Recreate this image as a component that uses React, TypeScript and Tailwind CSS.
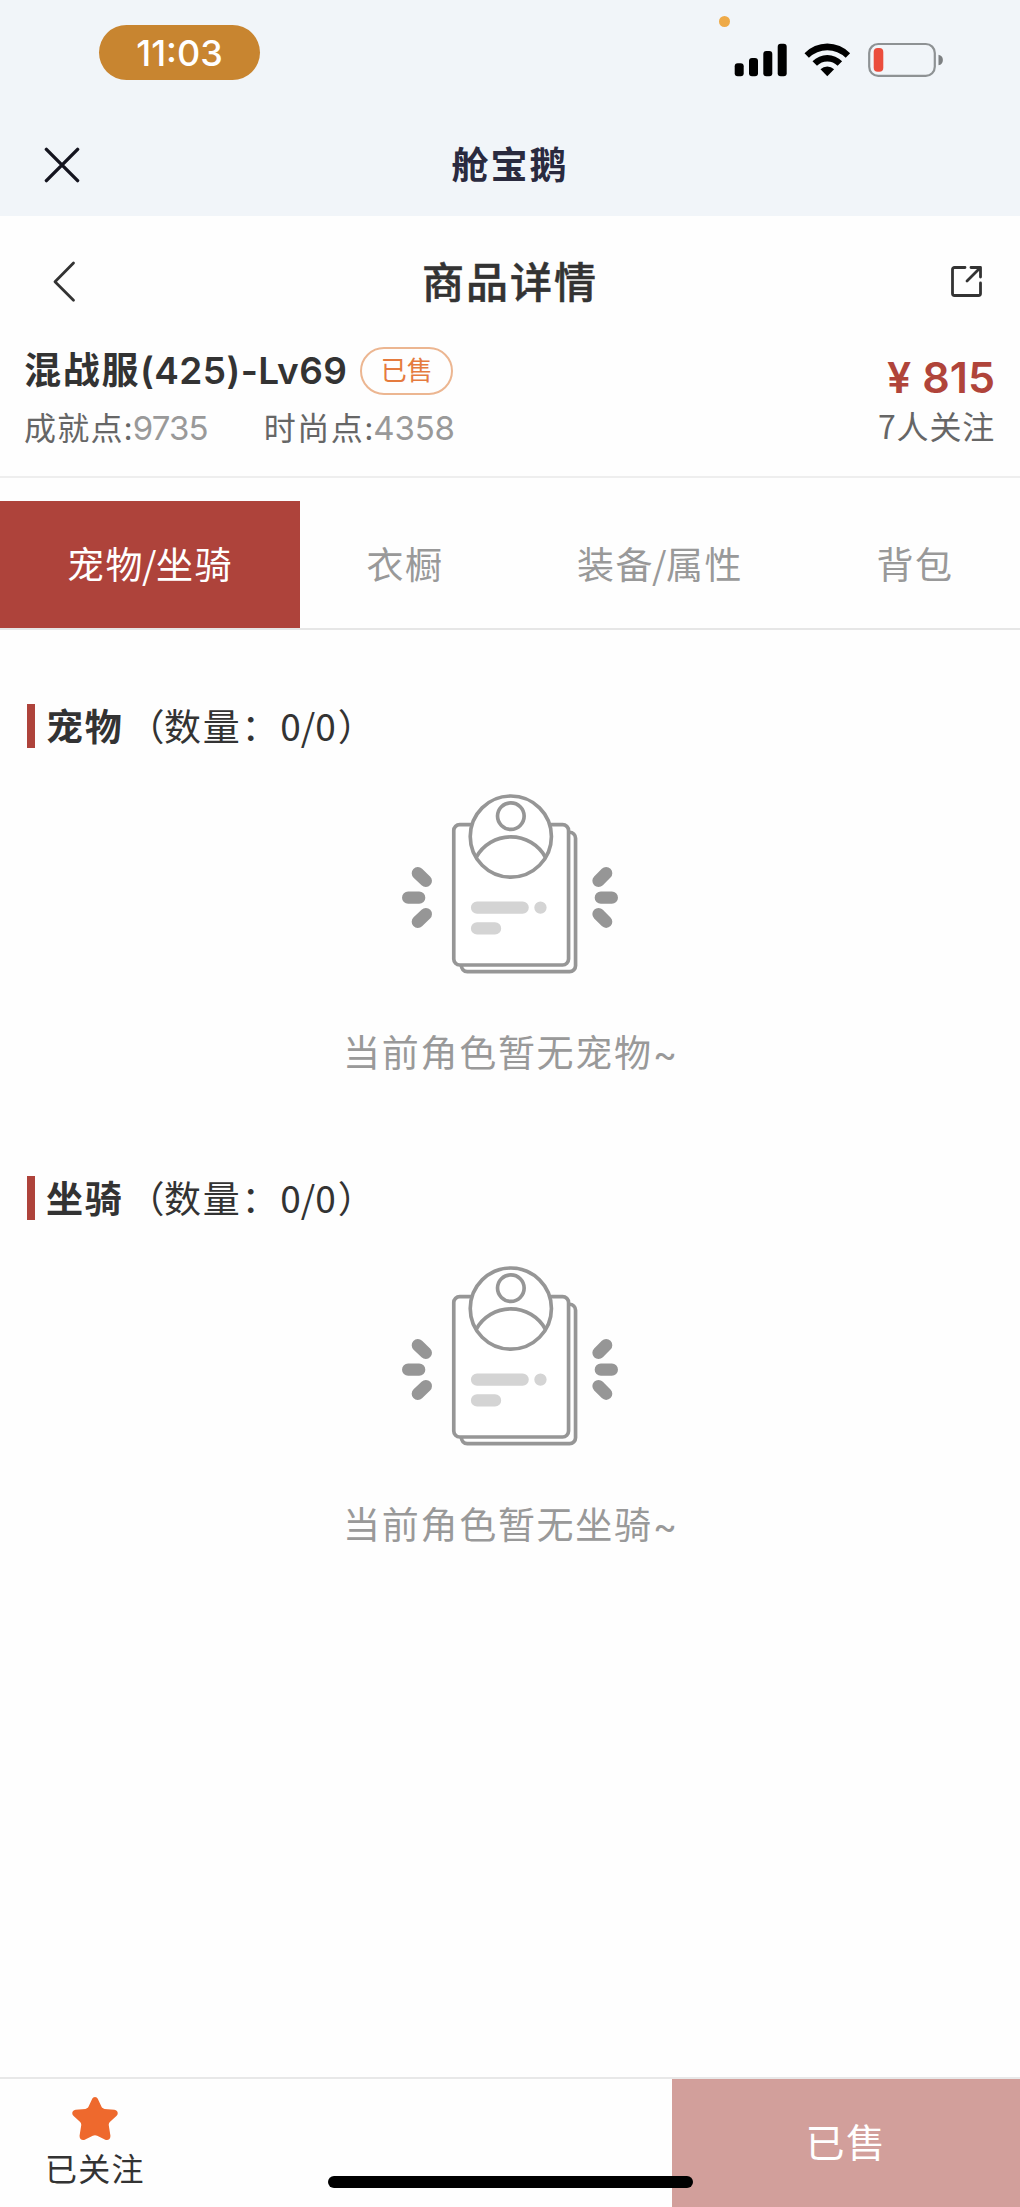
import React, { useState } from "react";

const TABS = [
  { id: "pets", label: "宠物/坐骑", width: "w-[300px]" },
  { id: "wardrobe", label: "衣橱", width: "w-[210px]" },
  { id: "gear", label: "装备/属性", width: "w-[300px]" },
  { id: "bag", label: "背包", width: "w-[210px]" },
];

const SECTIONS = [
  { id: "pet", title: "宠物", count: "0/0", empty: "当前角色暂无宠物~" },
  { id: "mount", title: "坐骑", count: "0/0", empty: "当前角色暂无坐骑~" },
];

function StatusIcons() {
  return (
    <svg className="absolute left-[680px] top-[12px]" width="270" height="70" viewBox="680 12 270 70">
      <circle cx="724.5" cy="21.5" r="5.5" fill="#eeaa48" />
      <rect x="734.7" y="63.3" width="9" height="13" rx="3" />
      <rect x="749" y="58" width="9" height="18.3" rx="3" />
      <rect x="763.3" y="51" width="9" height="25.3" rx="3" />
      <rect x="777.7" y="43.7" width="9" height="32.6" rx="3" />
      {/* wifi */}
      <path d="M804.5 53.2a31.6 31.6 0 0 1 45.6 0l-4.4 4.6a26.4 26.4 0 0 0-36.8 0z" />
      <path d="M812.5 61.3a20.6 20.6 0 0 1 29.6 0l-4.5 4.4a14.6 14.6 0 0 0-20.6 0z" />
      <path d="M820.5 69.2a10.2 10.2 0 0 1 13.6 0l-6.8 7.1z" />
      {/* battery */}
      <rect x="869.2" y="44" width="65.6" height="31.8" rx="9" fill="none" stroke="#8e9294" strokeWidth="2.2" />
      <rect x="873.7" y="48" width="9.6" height="23.8" rx="4" fill="#eb4d3d" />
      <path d="M938.5 54.7a5.4 5.4 0 0 1 0 10.6z" fill="#7d8082" />
    </svg>
  );
}

function EmptyArt() {
  return (
    <svg width="220" height="183" viewBox="60 65 660 550" fill="none" stroke="#969696" strokeWidth="11">
      <path d="M566 186h3a18 18 0 0 1 18 18v383a18 18 0 0 1-18 18H262a18 18 0 0 1-18-20" />
      <rect x="221" y="163" width="345" height="422" rx="18" fill="#fff" />
      <circle cx="392.5" cy="199" r="122" fill="#fff" />
      <circle cx="392.5" cy="137.5" r="40" />
      <path d="M288 262a119 119 0 0 1 209 0" />
      <g strokeWidth="37" strokeLinecap="round">
        <path d="M113 309l24 23M84 382.5h33M137 432l-24 23" />
        <path d="M679 309l-23 23M663 382.5h33M656 432l23 23" />
      </g>
      <g stroke="#d4d4d4" strokeWidth="37" strokeLinecap="round">
        <path d="M291 412.5h137M481.5 412.5h.1M291 475h54" />
      </g>
    </svg>
  );
}

function EmptySection({ title, count, empty }: { title: string; count: string; empty: string }) {
  return (
    <section className="h-[472px]">
      <div className="flex h-[44px] items-center pl-[27px]">
        <span className="h-full w-[8px] bg-[#ae433b]" />
        <h3 className="mb-[2px] ml-[11px] flex font-['Noto_Sans_CJK_SC',sans-serif] text-[37px] leading-[40px] tracking-[1.7px] text-[#333]">
          <span className="font-bold">{title}</span>
          <span className="ml-[4px] -mr-[2px]">（</span>
          <span>数量：</span>
          <span className="tracking-[0px]">{count}</span>
          <span className="ml-[2px]">）</span>
        </h3>
      </div>
      <div className="mt-[44px] flex flex-col items-center">
        <EmptyArt />
        <p className="mt-[59px] pl-[2px] text-[37px] leading-[40px] tracking-[1.7px] text-[#999]">{empty}</p>
      </div>
    </section>
  );
}

export default function App() {
  const [activeTab, setActiveTab] = useState("pets");

  return (
    <div
      lang="zh-CN"
      className="relative flex h-[2207px] w-[1020px] flex-col overflow-hidden bg-[#fefefe] font-['Inter','Noto_Sans_CJK_SC',sans-serif] text-[#333]"
    >
      {/* Status bar + app bar */}
      <header className="relative h-[216px] bg-[#f1f5f9]">
        <div className="pt-[25px] pl-[99px]">
          <div className="flex h-[55px] w-[161px] items-center justify-center rounded-full bg-[#c88530] text-[36px] font-medium leading-none text-white">
            11:03
          </div>
        </div>
        <StatusIcons />
        <div className="mt-[55px] grid h-[60px] grid-cols-3 items-center">
          <svg className="ml-[44px]" width="36" height="36" viewBox="0 0 36 36" stroke="#14141f" strokeWidth="3.4" strokeLinecap="round">
            <path d="M2.4 2.4l31.2 31.2M33.6 2.4L2.4 33.6" />
          </svg>
          <h1 className="pt-[2px] text-center text-[37px] font-bold leading-[40px] tracking-[2px] text-[#2a2a3f]">舱宝鹅</h1>
        </div>
      </header>

      {/* Page title */}
      <div className="grid h-[131px] grid-cols-3 items-center">
        <svg className="ml-[52px]" width="24" height="42" viewBox="0 0 24 42" fill="none" stroke="#333" strokeWidth="2.8" strokeLinecap="round" strokeLinejoin="round">
          <path d="M21.5 2L3 20.7l18.5 18.6" />
        </svg>
        <h2 className="pt-[3px] text-center text-[42px] font-medium leading-[48px] tracking-[2px] [-webkit-text-stroke:0.5px_#333]">商品详情</h2>
        <svg className="mr-[37px] justify-self-end" width="33" height="33" viewBox="0 0 33 33" fill="none" stroke="#333" strokeWidth="2.8" strokeLinecap="round" strokeLinejoin="round">
          <path d="M15 2.5H4.5a2 2 0 0 0-2 2v24a2 2 0 0 0 2 2h24a2 2 0 0 0 2-2V18M21 2.5h9.500V12M30 3L17 16" />
        </svg>
      </div>

      {/* Listing summary */}
      <div className="flex h-[131px] justify-between border-b-2 border-[#eee] pr-[25px] pl-[24px]">
        <div>
          <div className="flex h-[48px] items-center">
            <span className="text-[37px] font-semibold leading-[48px]">
              <span className="tracking-[1.7px]">混战服</span>
              <span className="tracking-[0.4px]">(425)-Lv69</span>
            </span>
            <span className="ml-[13px] flex h-[48px] w-[93px] items-center justify-center rounded-full border-2 border-[#ecb691] text-[26px] leading-none text-[#e57b3e]">
              已售
            </span>
          </div>
          <div className="mt-[13px] flex gap-[56px] text-[32px] leading-[40px] text-[#666]">
            <span>
              <span className="tracking-[1.2px]">成就点</span>:<span className="text-[33px] tracking-[-0.9px] text-[#999]">9735</span>
            </span>
            <span>
              <span className="tracking-[1.5px]">时尚点</span>:<span className="text-[33px] tracking-[-0.2px] text-[#999]">4358</span>
            </span>
          </div>
        </div>
        <div className="flex flex-col items-end">
          <div className="mt-[6px] text-[43px] font-semibold leading-[48px] text-[#b0443a]">
            <span className="mr-[11px]">¥</span>815
          </div>
          <div className="mt-[4px] font-['Noto_Sans_CJK_SC',sans-serif] text-[32px] leading-[40px] tracking-[0.8px] text-[#666]">7人关注</div>
        </div>
      </div>

      {/* Tabs */}
      <nav className="mt-[23px] flex h-[129px] border-b-2 border-[#e6e6e6]">
        {TABS.map((tab) => {
          const [first, second] = tab.label.split("/");
          return (
            <button
              key={tab.id}
              onClick={() => setActiveTab(tab.id)}
              className={`${tab.width} flex items-center justify-center pb-[3px] font-['Noto_Sans_CJK_SC',sans-serif] text-[37px] leading-[40px] tracking-[1.5px] ${
                activeTab === tab.id ? "bg-[#ae433b] text-white" : "text-[#999]"
              }`}
            >
              <span>{first}</span>
              {second && <span className="-mx-[2px]">/</span>}
              {second && <span>{second}</span>}
            </button>
          );
        })}
      </nav>

      <main className="flex-1 pt-[74px]">
        {SECTIONS.map((s) => (
          <EmptySection key={s.id} title={s.title} count={s.count} empty={s.empty} />
        ))}
      </main>

      {/* Bottom bar */}
      <footer className="flex h-[130px] justify-between border-t-2 border-[#e8e8e8]">
        <button className="ml-[45px] flex flex-col items-center pt-[17px]">
          <svg width="46" height="45" viewBox="0 0 46 45" fill="#ee692d">
            <path d="M20 3.200C21.200.3 24.800.3 26 3.200l3.400 7.300c.6 1.400 1.700 2.100 3.200 2.400l9.800.9c3.500.5 4.400 4 2 6.300l-6.300 5.600c-1.100 1-1.500 2.200-1.300 3.700l1.600 10c.4 3.700-2.400 5.700-5.600 4.200l-7.600-3.900c-1.500-.7-2.900-.7-4.400 0l-7.600 3.900c-3.200 1.500-6-.5-5.600-4.200l1.600-10c.2-1.500-.2-2.700-1.300-3.700l-6.300-5.600c-2.400-2.300-1.500-5.800 2-6.300l9.800-.9c1.500-.3 2.600-1 3.200-2.400z" />
          </svg>
          <span className="mt-[9px] text-[32px] leading-[40px] tracking-[1.2px]">已关注</span>
        </button>
        <button className="flex w-[348px] items-center justify-center bg-[#d29f9b] pb-[2px] text-[39px] leading-none tracking-[1.5px] text-white">
          已售
        </button>
      </footer>

      <div className="absolute left-[328px] top-[2176px] h-[12px] w-[365px] rounded-full bg-black" />
    </div>
  );
}
